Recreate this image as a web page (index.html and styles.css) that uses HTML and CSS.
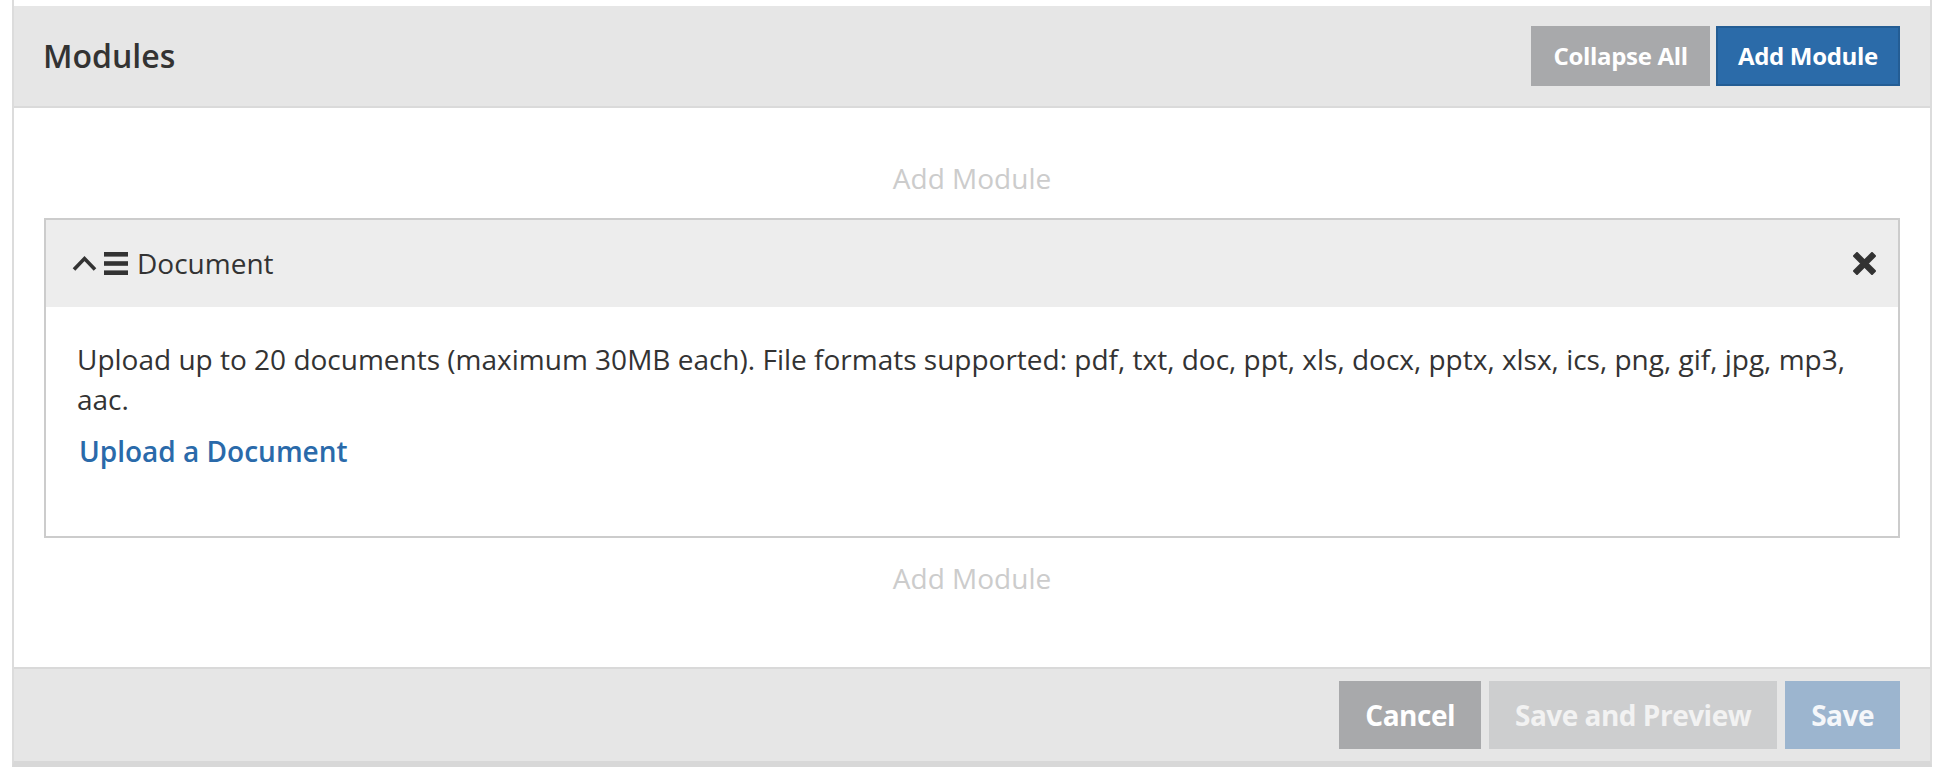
FILE: index.html
```html
<!DOCTYPE html>
<html lang="en">
<head>
    <meta charset="UTF-8">
    <title>Modules</title>
    <link rel="stylesheet" href="styles.css">
</head>
<body>
    <div class="panel">
        <div class="panel-top"></div>

        <div class="panel-heading">
            <h2 class="panel-title">Modules</h2>
            <div class="heading-actions">
                <button class="btn btn-sm btn-gray">Collapse All</button>
                <button class="btn btn-sm btn-blue">Add Module</button>
            </div>
        </div>

        <div class="panel-body">
            <div class="add-link">Add Module</div>

            <div class="module">
                <div class="module-header">
                    <svg class="icon-chevron" width="25" height="16" viewBox="0 0 25 16">
                        <polyline points="2,14.5 12.5,3.5 23,14.5" fill="none" stroke="#333" stroke-width="3.6"/>
                    </svg>
                    <svg class="icon-bars" width="24" height="23" viewBox="0 0 24 23">
                        <rect x="0" y="0" width="24" height="4.6" fill="#333"/>
                        <rect x="0" y="9.2" width="24" height="4.6" fill="#333"/>
                        <rect x="0" y="18.4" width="24" height="4.6" fill="#333"/>
                    </svg>
                    <span class="module-title">Document</span>
                    <svg class="icon-close" width="23" height="23" viewBox="0 0 23 23">
                        <path d="M4 1 L11.5 8.5 L19 1 L22 4 L14.5 11.5 L22 19 L19 22 L11.5 14.5 L4 22 L1 19 L8.5 11.5 L1 4 Z" fill="#333" stroke="#333" stroke-width="2" stroke-linejoin="round"/>
                    </svg>
                </div>
                <div class="module-body">
                    <p>Upload up to 20 documents (maximum 30MB each). File formats supported: pdf, txt, doc, ppt, xls, docx, pptx, xlsx, ics, png, gif, jpg, mp3, aac.</p>
                    <a class="upload-link" href="#">Upload a Document</a>
                </div>
            </div>

            <div class="add-link">Add Module</div>
        </div>

        <div class="panel-footer">
            <button class="btn btn-gray">Cancel</button>
            <button class="btn btn-disabled">Save and Preview</button>
            <button class="btn btn-blue-disabled">Save</button>
        </div>
    </div>
</body>
</html>
```

FILE: styles.css
```css
/* Base */
* {
    margin: 0;
    padding: 0;
    box-sizing: border-box;
}

body {
    font-family: 'Open Sans', 'Liberation Sans', sans-serif;
    font-size: 28px;
    line-height: 40px;
    color: #333333;
    background-color: #ffffff;
}

/* Panel */
.panel {
    margin-left: 12px;
    width: 1920px;
    border-left: 2px solid #dcdcdc;
    border-right: 2px solid #dcdcdc;
    border-bottom: 6px solid #d8d8d8;
    background-color: #ffffff;
}

.panel-top {
    height: 6px;
}

.panel-heading {
    display: flex;
    justify-content: space-between;
    align-items: center;
    padding: 20px 30px 20px 29px;
    background-color: #e6e6e6;
    border-bottom: 2px solid #dadada;
}

.panel-title {
    font-size: 32px;
    font-weight: 600;
    line-height: 40px;
}

.heading-actions {
    display: flex;
    gap: 6px;
}

/* Buttons */
.btn {
    font-family: inherit;
    font-size: 28px;
    font-weight: 700;
    line-height: 40px;
    letter-spacing: -0.5px;
    padding: 12px 24px;
    border: 2px solid transparent;
    border-radius: 0;
    color: #ffffff;
    cursor: pointer;
}

.btn-sm {
    font-size: 24px;
    line-height: 36px;
    letter-spacing: -0.3px;
    padding: 10px 20px;
}

.btn-gray {
    background-color: #a8a9ab;
    border-color: #a8a9ab;
}

.btn-blue {
    background-color: #2b6ba9;
    border-color: #245d94;
}

.btn-disabled {
    background-color: #cdcecf;
    border-color: #cdcecf;
    color: #f2f2f2;
}

.btn-blue-disabled {
    background-color: #9cb5cf;
    border-color: #9cb5cf;
    color: #f5f7fa;
}

/* Body */
.panel-body {
    padding: 30px 30px 49px;
}

.add-link {
    text-align: center;
    color: #cccccc;
    padding: 20px 0;
}

/* Module */
.module {
    border: 2px solid #cccccc;
}

.module-header {
    display: flex;
    align-items: center;
    padding: 23px 22px 24px 26px;
    background-color: #ededed;
}

.icon-chevron {
    margin-right: 7px;
}

.icon-bars {
    margin-right: 9px;
}

.module-title {
    flex: 1;
    font-size: 28px;
}

.module-body {
    padding: 32px 30px 65px 31px;
}

.module-body p {
    margin-bottom: 12px;
}

.upload-link {
    display: inline-block;
    margin-left: 2px;
    color: #2a6aaa;
    font-weight: 600;
    text-decoration: none;
}

/* Footer */
.panel-footer {
    display: flex;
    justify-content: flex-end;
    gap: 8px;
    padding: 12px 30px;
    background-color: #e6e6e6;
    border-top: 2px solid #d9d9d9;
}
```
